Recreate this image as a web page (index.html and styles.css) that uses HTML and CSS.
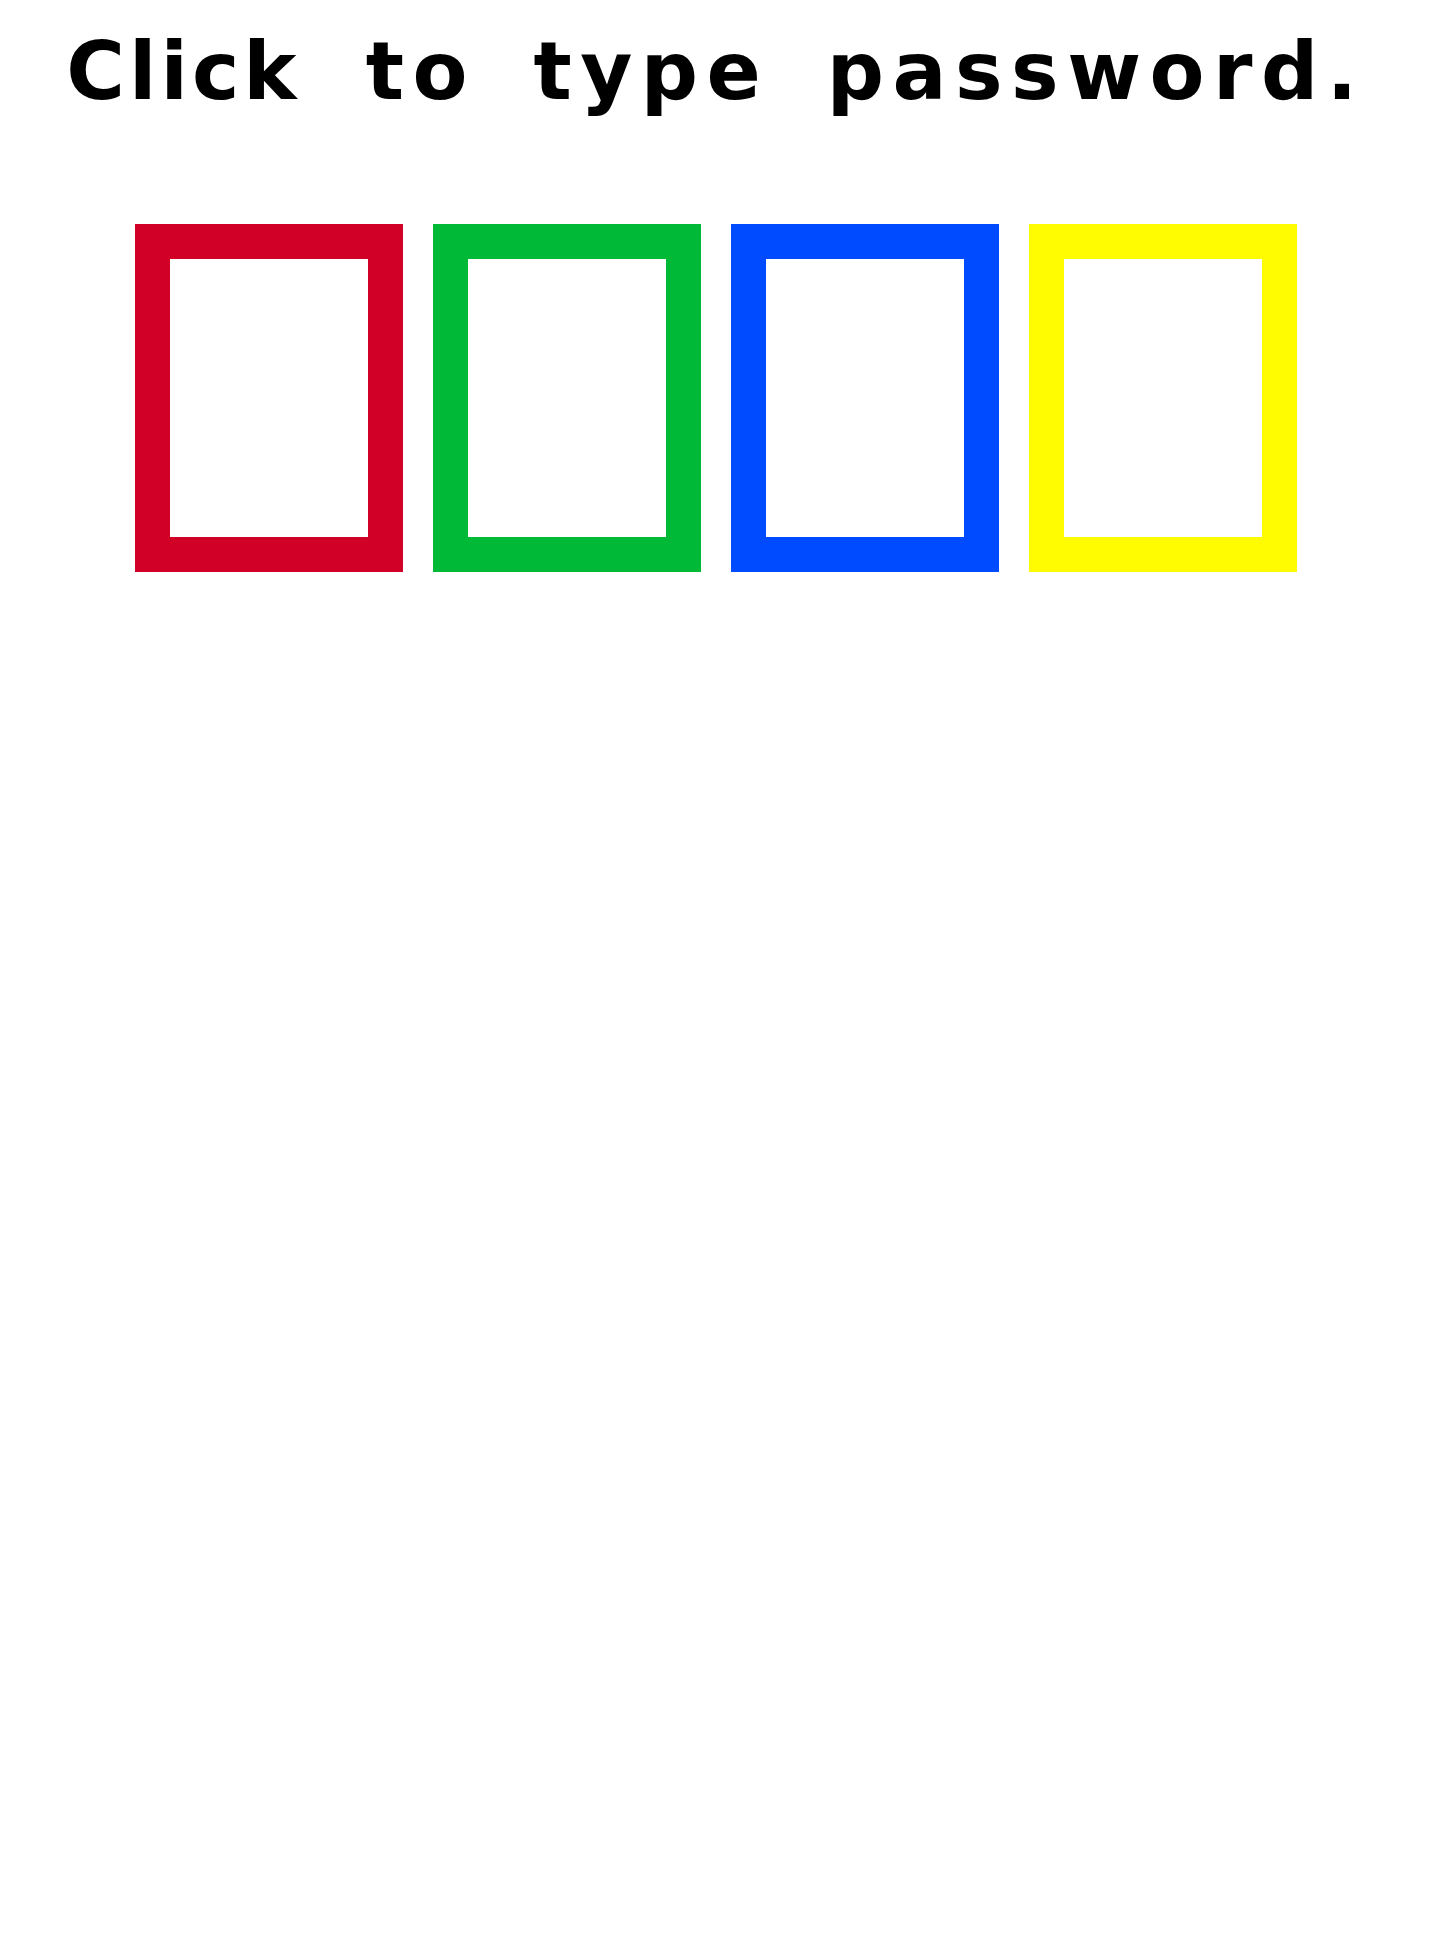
FILE: index.html
```html
<!DOCTYPE html>
<html lang="en">
<head>
<meta charset="utf-8">
<title>Password</title>
<link rel="stylesheet" href="styles.css">
</head>
<body>
<main class="page">
  <h1 class="prompt"><span class="tight">Click</span> to type password.</h1>
  <div class="slots">
    <div class="slot slot-red"></div>
    <div class="slot slot-green"></div>
    <div class="slot slot-blue"></div>
    <div class="slot slot-yellow"></div>
  </div>
</main>
</body>
</html>
```

FILE: styles.css
```css
html, body {
  margin: 0;
  padding: 0;
  background: #ffffff;
}

.page {
  width: 1432px;
  min-height: 1944px;
  display: flex;
  flex-direction: column;
  align-items: center;
}

.prompt {
  margin: 0;
  padding-top: 32px;
  font-family: "DejaVu Sans", "Verdana", sans-serif;
  font-weight: bold;
  font-size: 80px;
  line-height: 80px;
  letter-spacing: 8.5px;
  word-spacing: 21px;
  color: #000000;
  text-align: center;
  white-space: nowrap;
}

.tight {
  letter-spacing: 4px;
  margin-right: 8px;
}

.slots {
  display: flex;
  gap: 30px;
  margin-top: 112px;
}

.slot {
  box-sizing: border-box;
  width: 268px;
  height: 348px;
  border: 35px solid;
  background: #ffffff;
}

.slot-red { border-color: #d10027; }
.slot-green { border-color: #00b937; }
.slot-blue { border-color: #004bff; }
.slot-yellow { border-color: #fffb00; }
```
